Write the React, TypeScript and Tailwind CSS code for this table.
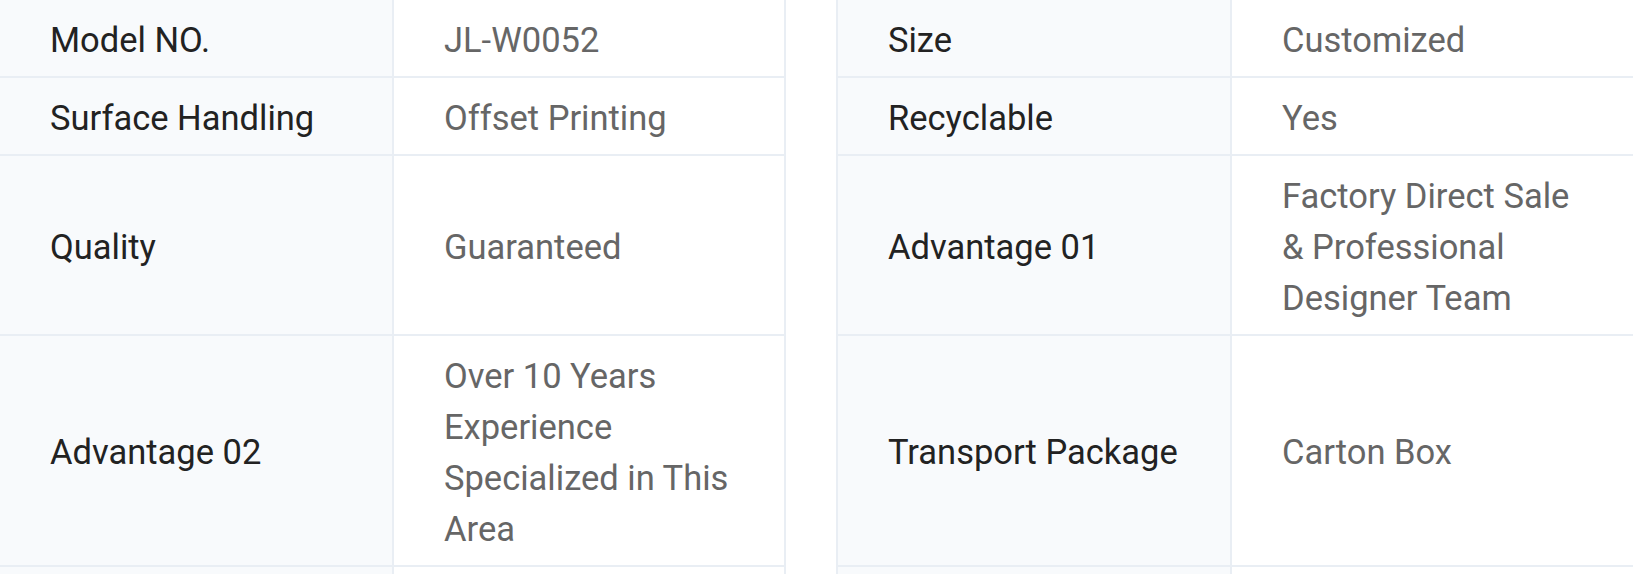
import React from 'react';

type Row = [string, string, string, string];

const rows: Row[] = [
  ['Model NO.', 'JL-W0052', 'Size', 'Customized'],
  ['Surface Handling', 'Offset Printing', 'Recyclable', 'Yes'],
  ['Quality', 'Guaranteed', 'Advantage 01', 'Factory Direct Sale & Professional Designer Team'],
  ['Advantage 02', 'Over 10 Years Experience Specialized in This Area', 'Transport Package', 'Carton Box'],
  ['', '', '', ''],
];

const cell = 'flex items-center min-h-[76px] pt-[14.5px] pb-[10.5px] pl-[50px] pr-[48px] border-b-2 border-[#e9eef4]';
const label = `${cell} bg-[#f8fafc] text-[#222222]`;
const value = `${cell} bg-white text-[#666666]`;

const App: React.FC = () => {
  return (
    <div
      className="h-[574px] w-full overflow-hidden bg-white text-[34.5px] leading-[51px]"
      style={{ fontFamily: 'Roboto, "Liberation Sans", sans-serif' }}
    >
      <div className="grid grid-cols-[394px_392px_50px_396px_1fr]">
        {rows.map((r, i) => (
          <React.Fragment key={i}>
            {/* left table */}
            <div className={`${label} border-r-2`}>{r[0]}</div>
            <div className={`${value} border-r-2`}>{r[1]}</div>
            <div />
            {/* right table */}
            <div className={`${label} border-l-2 border-r-2`}>{r[2]}</div>
            <div className={value}>{r[3]}</div>
          </React.Fragment>
        ))}
      </div>
    </div>
  );
};

export default App;
